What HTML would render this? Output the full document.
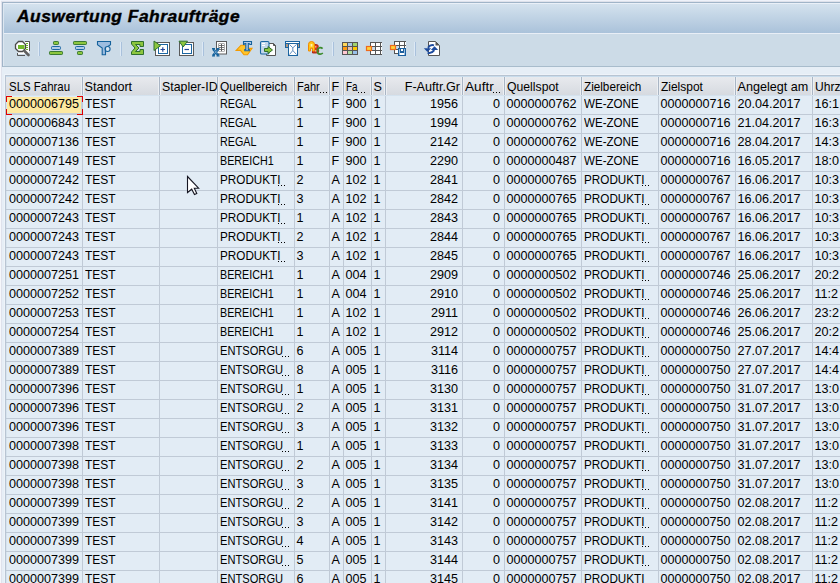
<!DOCTYPE html>
<html><head><meta charset="utf-8">
<style>
*{margin:0;padding:0;box-sizing:border-box}
html,body{width:840px;height:583px;overflow:hidden;background:#f6f7fb;font-family:"Liberation Sans",sans-serif;color:#000}
b,i{display:block;position:absolute}
#lcol{position:absolute;left:1px;top:1px;width:1px;height:582px;background:#dfe2ec}
#tcol{position:absolute;left:1px;top:1px;width:839px;height:1px;background:#dfe2eb}
#trow{position:absolute;left:1px;top:0;width:839px;height:1px;background:#eef2fa}
#frame{position:absolute;left:2px;top:2px;width:838px;height:65px;background:#a0b4c8}
#title{position:absolute;left:3px;top:3px;width:837px;height:30px;background:linear-gradient(#eaf0f8 0,#eaf0f8 1px,#d4e2ee 1px,#aac2da 100%)}
#title span{position:absolute;left:14px;top:3px;font-size:17.4px;font-weight:bold;font-style:italic;line-height:20px;white-space:nowrap;letter-spacing:0.5px;-webkit-text-stroke:0.4px #000}
#tsep{position:absolute;left:3px;top:33px;width:837px;height:1px;background:#e8eef6}
#tool{position:absolute;left:3px;top:34px;width:837px;height:32px;background:#ccdbe7}
#tbot{position:absolute;left:3px;top:66px;width:837px;height:1px;background:#a8bccc}
#work{position:absolute;left:2px;top:67px;width:838px;height:516px;background:#e6eef6}
#thl{position:absolute;left:4px;top:74px;width:836px;height:509px;background:#eef3f9}
#lhl{position:absolute;left:3px;top:3px;width:1px;height:63px;background:#dde7f1}
#grid{position:absolute;left:5px;top:75px;width:835px;height:508px;background:#b8c4d2}
#cells{position:absolute;left:6px;top:76px;width:834px;height:507px;background:#e2ecf5;border-left:1px solid #d6e3ee}
#hdr{position:absolute;left:6px;top:76px;width:834px;height:19px;background:linear-gradient(#c8dcec 0,#c8dcec 1px,#e8eaee 1px,#d6dae0 100%)}
.hs{top:77px;width:1px;height:18px;background:#a9b5c4;box-shadow:-1px 0 0 #eceff3,1px 0 0 #eceff3}
.vl{top:95px;width:1px;height:488px;background:#c0cad6}
.hl{left:6px;width:834px;height:1px;background:#c0cad6}
#hbot{position:absolute;left:6px;top:95px;width:834px;height:1px;background:#d4e2ee}
.t{position:absolute;line-height:20px;font-size:12.6px;white-space:nowrap;transform-origin:0 0}
.dt{width:1px;height:1px;background:#000}
#sel{position:absolute;left:6px;top:96px;width:77px;height:19px}
#sel .g{left:1px;top:1px;width:75px;height:17px;background:#c6cfdb}
#sel .y{left:1px;top:1px;width:74px;height:16px;background:#fde9a0}
#sel .k{background:#e00000}
#cur{position:absolute;left:186px;top:175px}
</style></head><body>
<div id="trow"></div><div id="tcol"></div><div id="lcol"></div>
<div id="frame"></div>
<div id="title"><span>Auswertung Fahraufträge</span></div>
<div id="tsep"></div>
<div id="tool"></div>
<div id="tbot"></div>
<div id="work"></div>
<div id="lhl"></div><div id="thl"></div>
<div id="grid"></div>
<div id="cells"></div>
<b class="hl" style="top:114px"></b><b class="hl" style="top:133px"></b><b class="hl" style="top:152px"></b><b class="hl" style="top:171px"></b><b class="hl" style="top:190px"></b><b class="hl" style="top:209px"></b><b class="hl" style="top:228px"></b><b class="hl" style="top:247px"></b><b class="hl" style="top:266px"></b><b class="hl" style="top:285px"></b><b class="hl" style="top:304px"></b><b class="hl" style="top:323px"></b><b class="hl" style="top:342px"></b><b class="hl" style="top:361px"></b><b class="hl" style="top:380px"></b><b class="hl" style="top:399px"></b><b class="hl" style="top:418px"></b><b class="hl" style="top:437px"></b><b class="hl" style="top:456px"></b><b class="hl" style="top:475px"></b><b class="hl" style="top:494px"></b><b class="hl" style="top:513px"></b><b class="hl" style="top:532px"></b><b class="hl" style="top:551px"></b><b class="hl" style="top:570px"></b><b class="hl" style="top:589px"></b>
<b class="vl" style="left:82px"></b><b class="vl" style="left:159px"></b><b class="vl" style="left:217px"></b><b class="vl" style="left:294px"></b><b class="vl" style="left:329px"></b><b class="vl" style="left:343px"></b><b class="vl" style="left:371px"></b><b class="vl" style="left:385px"></b><b class="vl" style="left:462px"></b><b class="vl" style="left:504px"></b><b class="vl" style="left:581px"></b><b class="vl" style="left:658px"></b><b class="vl" style="left:735px"></b><b class="vl" style="left:812px"></b>
<div id="hdr"></div>
<div id="hbot"></div>
<b class="hs" style="left:82px"></b><b class="hs" style="left:159px"></b><b class="hs" style="left:217px"></b><b class="hs" style="left:294px"></b><b class="hs" style="left:329px"></b><b class="hs" style="left:343px"></b><b class="hs" style="left:371px"></b><b class="hs" style="left:385px"></b><b class="hs" style="left:462px"></b><b class="hs" style="left:504px"></b><b class="hs" style="left:581px"></b><b class="hs" style="left:658px"></b><b class="hs" style="left:735px"></b><b class="hs" style="left:812px"></b>
<div id="sel"><b class="g"></b><b class="y"></b>
<b class="k" style="left:0;top:0;width:6px;height:1px"></b><b class="k" style="left:0;top:0;width:1px;height:6px"></b>
<b class="k" style="left:71px;top:0;width:6px;height:1px"></b><b class="k" style="left:76px;top:0;width:1px;height:6px"></b>
<b class="k" style="left:0;top:18px;width:6px;height:1px"></b><b class="k" style="left:0;top:13px;width:1px;height:6px"></b>
<b class="k" style="left:71px;top:18px;width:6px;height:1px"></b><b class="k" style="left:76px;top:13px;width:1px;height:6px"></b>
</div>
<div id="head"><span class="t" style="top:77px;left:9.0px;transform:scaleX(0.908)">SLS Fahrau</span><span class="t" style="top:77px;left:84.5px">Standort</span><span class="t" style="top:77px;left:161.5px;transform:scaleX(0.98)">Stapler-ID</span><span class="t" style="top:77px;left:219.5px;transform:scaleX(0.948)">Quellbereich</span><span class="t" style="top:77px;left:296.5px;transform:scaleX(0.88)">Fahr</span><b class="dt" style="left:320px;top:92px"></b><b class="dt" style="left:323px;top:92px"></b><b class="dt" style="left:326px;top:92px"></b><span class="t" style="top:77px;left:331.5px">F</span><span class="t" style="top:77px;left:345.5px;transform:scaleX(0.79)">Fa</span><b class="dt" style="left:358px;top:92px"></b><b class="dt" style="left:361px;top:92px"></b><b class="dt" style="left:364px;top:92px"></b><span class="t" style="top:77px;left:373.5px">S</span><span class="t" style="top:77px;left:386px;width:74px;text-align:right">F-Auftr.Gr</span><span class="t" style="top:77px;left:464.5px;transform:scaleX(1.08)">Auftr</span><b class="dt" style="left:493px;top:92px"></b><b class="dt" style="left:496px;top:92px"></b><b class="dt" style="left:499px;top:92px"></b><span class="t" style="top:77px;left:506.5px;transform:scaleX(0.97)">Quellspot</span><span class="t" style="top:77px;left:583.5px;transform:scaleX(0.93)">Zielbereich</span><span class="t" style="top:77px;left:660.5px;transform:scaleX(0.95)">Zielspot</span><span class="t" style="top:77px;left:737.5px">Angelegt am</span><span class="t" style="top:77px;left:814.5px;transform:scaleX(0.96)">Uhrz</span></div>
<svg id="icons" width="460" height="66" viewBox="0 0 460 66" style="position:absolute;left:0;top:0">
<g stroke-linejoin="miter">
<!-- separators -->
<g fill="#a9c1dc"><rect x="39" y="42" width="1" height="14"/><rect x="121" y="42" width="1" height="14"/><rect x="203" y="42" width="1" height="14"/><rect x="333" y="42" width="1" height="14"/><rect x="415" y="42" width="1" height="14"/></g>
<g fill="#dde9f5"><rect x="38" y="42" width="1" height="14"/><rect x="120" y="42" width="1" height="14"/><rect x="202" y="42" width="1" height="14"/><rect x="332" y="42" width="1" height="14"/><rect x="414" y="42" width="1" height="14"/></g>

<!-- 1 details -->
<path d="M25 41.5H29.5V51" fill="none" stroke="#555" stroke-width="1"/>
<rect x="18" y="42" width="11" height="12" fill="#fff"/>
<path d="M17.5 53V55.5H25" fill="none" stroke="#555" stroke-width="1"/>
<polygon points="18.5,41.5 22.5,41.5 25.5,44.5 25.5,48.5 22.5,51.5 18.5,51.5 15.5,48.5 15.5,44.5" fill="#fff" stroke="#4a4a4a" stroke-width="1.3"/>
<rect x="18" y="45" width="6.5" height="4" fill="#72b82a"/>
<g fill="#6db320"><rect x="26" y="43" width="2" height="1"/><rect x="26" y="45" width="2" height="1"/><rect x="26" y="47" width="2" height="1"/><rect x="26" y="49" width="2" height="1"/></g>
<path d="M24.5 51L28.5 55" stroke="#606060" stroke-width="2.6" stroke-linecap="round"/>

<!-- 2 sort asc -->
<rect x="53.5" y="41.5" width="5" height="3" rx="0.7" fill="#8dc63f" stroke="#3b7a33"/>
<rect x="51.5" y="46.5" width="9" height="3" rx="0.9" fill="#b2cbe6" stroke="#1b67a3"/>
<rect x="49.5" y="51.5" width="13" height="3" rx="0.7" fill="#8dc63f" stroke="#3b7a33"/>
<!-- 3 sort desc -->
<rect x="73.5" y="41.5" width="13" height="3" rx="0.7" fill="#8dc63f" stroke="#3b7a33"/>
<rect x="75.5" y="46.5" width="9" height="3" rx="0.9" fill="#b2cbe6" stroke="#1b67a3"/>
<rect x="77.5" y="51.5" width="5" height="3" rx="0.7" fill="#8dc63f" stroke="#3b7a33"/>
<!-- 4 filter -->
<path d="M97.5 41.5H110.5V44.8L105.5 48V54.8H102.2V48L97.5 44.8Z" fill="#9dbde0" stroke="#15629c" stroke-width="1.1"/>
<circle cx="107.6" cy="49" r="2.5" fill="#d8e5f2" stroke="#15629c" stroke-width="1.1"/>
<path d="M105.5 47V52" stroke="#15629c" stroke-width="1.1"/>

<!-- 5 sigma -->
<path d="M131.5 41.5H143.5V46.5H140V44.5H135.5L139 48L135.5 51.5H140V49.5H143.5V54.5H131.5V52L135 48L131.5 44Z" fill="#8cc63f" stroke="#2f6f2f" stroke-width="1"/>
<!-- 6 expand -->
<rect x="155.5" y="42.5" width="14" height="13" fill="#fff" stroke="#5a5a5a"/>
<rect x="158.5" y="44.5" width="9" height="9" fill="#fff" stroke="#1b67a3"/>
<path d="M160.5 49.5H165M162.8 47.3V51.8" stroke="#23479a" stroke-width="1.2"/>
<path d="M154 41V50.5L160.5 45.7Z" fill="#8cc63f" stroke="#2f6f2f" stroke-width="1"/>
<!-- 7 collapse -->
<rect x="179.5" y="42.5" width="14" height="13" fill="#fff" stroke="#5a5a5a"/>
<rect x="182.5" y="44.5" width="9" height="9" fill="#fff" stroke="#1b67a3"/>
<path d="M184.5 49.5H189" stroke="#23479a" stroke-width="1.2"/>
<path d="M179 41.2H187.5L183.2 47Z" fill="#8cc63f" stroke="#2f6f2f" stroke-width="1"/>

<!-- 8 excel -->
<rect x="216.5" y="41.5" width="10" height="12.5" fill="#fff" stroke="#5a5a5a"/>
<rect x="218.5" y="43.5" width="6" height="8" fill="#5a5a5a"/>
<g fill="#fff"><rect x="219" y="44" width="2" height="1.2"/><rect x="222" y="44" width="2" height="1.2"/><rect x="219" y="46" width="2" height="1.2"/><rect x="222" y="46" width="2" height="1.2"/><rect x="219" y="48" width="2" height="1.2"/><rect x="222" y="48" width="2" height="1.2"/><rect x="219" y="50" width="2" height="1.2"/><rect x="222" y="50" width="2" height="1.2"/></g>
<rect x="211" y="47" width="9" height="10" fill="#cfe0f0" opacity="0"/>
<path d="M213 49L218.5 55.5M218.5 49L213 55.5" stroke="#15629c" stroke-width="2.2"/>
<path d="M212 48.6H215M216.5 48.6H219.5M212 55.8H215M216.5 55.8H219.5" stroke="#15629c" stroke-width="1.3"/>
<path d="M214.3 50.3L217.2 53.8M217.2 50.3L214.3 53.8" stroke="#9cc0e0" stroke-width="0.6"/>
<!-- 9 word T -->
<path d="M236.2 50.4L241 45.2H245.5L249 48.4H252L247.5 54.8H244L240.5 50.4Z" fill="#ffc52a" stroke="#f39a00" stroke-width="1.1"/>
<path d="M243.5 41.5H251.5V44.5H250L249 43.5H248.3V49.5H249.3V50.8H244.8V49.5H245.8V43.5H245L244 44.5H243.5Z" fill="#b5cde6" stroke="#15629c" stroke-width="1.1"/>
<!-- 10 local file -->
<path d="M266.5 43.5H273.5L275.5 45.5V55.5H266.5Z" fill="#fff" stroke="#555"/>
<path d="M273.5 43.5V45.5H275.5" fill="#555" stroke="#555"/>
<rect x="260.5" y="41.5" width="8.5" height="12.5" rx="1.3" fill="#c2d6eb" stroke="#1b67a3" stroke-width="1.1"/>
<g fill="#fff"><rect x="262" y="43" width="3" height="1"/><rect x="262" y="45" width="3" height="1"/></g>
<path d="M264.5 48.5H268V46.5L272.5 50L268 53.5V51.5H264.5Z" fill="#8cc63f" stroke="#2f6f2f" stroke-width="1"/>
<!-- 11 mail -->
<rect x="285" y="41" width="15" height="7" fill="#1b64a0"/>
<rect x="286" y="42" width="13" height="1" fill="#fff"/>
<rect x="286" y="44" width="2" height="3" fill="#b09882"/>
<rect x="297" y="44" width="2" height="3" fill="#b09882"/>
<rect x="288" y="43" width="10" height="13" fill="#1b64a0"/>
<rect x="289" y="44" width="8" height="11" fill="#fff"/>
<path d="M289.5 44.5L292.8 47.8V50.5L289.5 54.5M296.5 44.5L292.8 47.8M292.8 50.5L296.5 54.5" fill="none" stroke="#3a72b0" stroke-width="0.8"/>
<!-- 12 ABC -->
<path d="M312.5 44.5H316.3Q318.3 44.5 318.3 46.6Q318.3 48 317.2 48.6Q318.8 49.2 318.8 51Q318.8 53 316.3 53H312.5Z" fill="#d23a1c" stroke="#a8200e" stroke-width="0.9"/>
<rect x="315" y="46" width="1.4" height="1.6" fill="#f0a080"/><rect x="315" y="50" width="1.6" height="1.6" fill="#f0a080"/>
<path d="M308.5 51V44.3Q308.5 41.5 311.5 41.5Q314.5 41.5 314.5 44.3V51H312.5V48.3H310.5V51Z" fill="#ffc619" stroke="#f28a00" stroke-width="1"/>
<rect x="310.6" y="44" width="1.8" height="2.6" fill="#fff3b0"/>
<path d="M322.6 48.6Q321.3 47.3 319.6 47.7Q317.4 48.3 317.4 50.9Q317.4 54 319.9 54.1Q321.6 54.2 322.8 53" fill="none" stroke="#3a8a2a" stroke-width="1.7"/>
<!-- 13 layout grid -->
<rect x="342" y="42" width="16" height="13" fill="#555"/>
<rect x="343" y="43" width="4" height="3" fill="#ffd85a"/><rect x="348" y="43" width="4" height="3" fill="#a6c8ea"/><rect x="353" y="43" width="4" height="3" fill="#a2d26c"/>
<rect x="343" y="47" width="4" height="3" fill="#ff9a12"/><rect x="348" y="47" width="4" height="3" fill="#e6bfae"/><rect x="353" y="47" width="4" height="3" fill="#ffc800"/>
<rect x="343" y="51" width="4" height="3" fill="#ffc8d2"/><rect x="348" y="51" width="4" height="3" fill="#b0dea0"/><rect x="353" y="51" width="4" height="3" fill="#98c0e8"/>
<!-- 14 choose layout -->
<rect x="370" y="42" width="12" height="13" fill="#555"/>
<g fill="#fff"><rect x="371" y="43" width="4" height="3"/><rect x="376" y="43" width="4" height="3"/><rect x="381" y="43" width="1" height="3"/>
<rect x="371" y="47" width="4" height="3" style="fill:#c8dcec"/><rect x="376" y="47" width="4" height="3"/><rect x="381" y="47" width="1" height="3"/>
<rect x="371" y="51" width="4" height="3"/><rect x="376" y="51" width="4" height="3"/><rect x="381" y="51" width="1" height="3"/></g>
<rect x="366.5" y="46.5" width="5" height="4" fill="#ffd33a" stroke="#ee6a1c" stroke-width="1.2"/>
<!-- 15 save layout -->
<rect x="394" y="41" width="12" height="13" fill="#555"/>
<g fill="#fff"><rect x="395" y="42" width="4" height="3"/><rect x="400" y="42" width="4" height="3"/><rect x="405" y="42" width="1" height="3"/>
<rect x="395" y="46" width="4" height="3" style="fill:#c8dcec"/><rect x="400" y="46" width="4" height="3"/><rect x="405" y="46" width="1" height="3"/>
<rect x="395" y="50" width="4" height="3"/><rect x="400" y="50" width="4" height="3"/><rect x="405" y="50" width="1" height="3"/></g>
<rect x="390.5" y="45.5" width="5" height="4" fill="#ffd33a" stroke="#ee6a1c" stroke-width="1.2"/>
<rect x="398" y="48" width="8" height="8" fill="#1b5f9e"/>
<rect x="399" y="49" width="1" height="6" fill="#9fbfe0"/><rect x="404" y="49" width="1" height="6" fill="#9fbfe0"/>
<rect x="401" y="49" width="2" height="2" fill="#fff"/>
<rect x="400" y="53" width="4" height="2" fill="#fff"/>
<!-- 16 refresh -->
<path d="M428.5 41.5H435.5L439.5 45.5V55.5H428.5Z" fill="#fff" stroke="#555"/>
<path d="M435.5 41.5V45.5H439.5Z" fill="#555"/>
<path d="M434 45.4Q430.5 44.2 428 47.8" fill="none" stroke="#1d4b9e" stroke-width="2"/>
<path d="M423.8 48.2H431.2L427.5 52Z" fill="#1d4b9e"/>
<path d="M427.6 52.8Q431.5 54 434.3 50.2" fill="none" stroke="#1d4b9e" stroke-width="2"/>
<path d="M430.8 50H438.2L434.5 46.2Z" fill="#1d4b9e"/>
</g>
</svg>

<div id="body">
<span class="t" style="top:94px;left:9.0px">0000006795</span><span class="t" style="top:94px;left:84.5px;transform:scaleX(0.95)">TEST</span><span class="t" style="top:94px;left:219.5px;transform:scaleX(0.854)">REGAL</span><span class="t" style="top:94px;left:296.5px">1</span><span class="t" style="top:94px;left:331.5px">F</span><span class="t" style="top:94px;left:345.5px">900</span><span class="t" style="top:94px;left:373.5px">1</span><span class="t" style="top:94px;left:386px;width:72px;text-align:right">1956</span><span class="t" style="top:94px;left:463px;width:37px;text-align:right">0</span><span class="t" style="top:94px;left:506.5px">0000000762</span><span class="t" style="top:94px;left:583.5px;transform:scaleX(0.92)">WE-ZONE</span><span class="t" style="top:94px;left:660.5px">0000000716</span><span class="t" style="top:94px;left:737.5px">20.04.2017</span><span class="t" style="top:94px;left:814.5px">16:1</span>
<span class="t" style="top:113px;left:9.0px">0000006843</span><span class="t" style="top:113px;left:84.5px;transform:scaleX(0.95)">TEST</span><span class="t" style="top:113px;left:219.5px;transform:scaleX(0.854)">REGAL</span><span class="t" style="top:113px;left:296.5px">1</span><span class="t" style="top:113px;left:331.5px">F</span><span class="t" style="top:113px;left:345.5px">900</span><span class="t" style="top:113px;left:373.5px">1</span><span class="t" style="top:113px;left:386px;width:72px;text-align:right">1994</span><span class="t" style="top:113px;left:463px;width:37px;text-align:right">0</span><span class="t" style="top:113px;left:506.5px">0000000762</span><span class="t" style="top:113px;left:583.5px;transform:scaleX(0.92)">WE-ZONE</span><span class="t" style="top:113px;left:660.5px">0000000716</span><span class="t" style="top:113px;left:737.5px">21.04.2017</span><span class="t" style="top:113px;left:814.5px">16:3</span>
<span class="t" style="top:132px;left:9.0px">0000007136</span><span class="t" style="top:132px;left:84.5px;transform:scaleX(0.95)">TEST</span><span class="t" style="top:132px;left:219.5px;transform:scaleX(0.854)">REGAL</span><span class="t" style="top:132px;left:296.5px">1</span><span class="t" style="top:132px;left:331.5px">F</span><span class="t" style="top:132px;left:345.5px">900</span><span class="t" style="top:132px;left:373.5px">1</span><span class="t" style="top:132px;left:386px;width:72px;text-align:right">2142</span><span class="t" style="top:132px;left:463px;width:37px;text-align:right">0</span><span class="t" style="top:132px;left:506.5px">0000000762</span><span class="t" style="top:132px;left:583.5px;transform:scaleX(0.92)">WE-ZONE</span><span class="t" style="top:132px;left:660.5px">0000000716</span><span class="t" style="top:132px;left:737.5px">28.04.2017</span><span class="t" style="top:132px;left:814.5px">14:3</span>
<span class="t" style="top:151px;left:9.0px">0000007149</span><span class="t" style="top:151px;left:84.5px;transform:scaleX(0.95)">TEST</span><span class="t" style="top:151px;left:219.5px;transform:scaleX(0.852)">BEREICH1</span><span class="t" style="top:151px;left:296.5px">1</span><span class="t" style="top:151px;left:331.5px">F</span><span class="t" style="top:151px;left:345.5px">900</span><span class="t" style="top:151px;left:373.5px">1</span><span class="t" style="top:151px;left:386px;width:72px;text-align:right">2290</span><span class="t" style="top:151px;left:463px;width:37px;text-align:right">0</span><span class="t" style="top:151px;left:506.5px">0000000487</span><span class="t" style="top:151px;left:583.5px;transform:scaleX(0.92)">WE-ZONE</span><span class="t" style="top:151px;left:660.5px">0000000716</span><span class="t" style="top:151px;left:737.5px">16.05.2017</span><span class="t" style="top:151px;left:814.5px">18:0</span>
<span class="t" style="top:170px;left:9.0px">0000007242</span><span class="t" style="top:170px;left:84.5px;transform:scaleX(0.95)">TEST</span><span class="t" style="top:170px;left:219.5px;transform:scaleX(0.93)">PRODUKTI</span><b class="dt" style="left:278px;top:185px"></b><b class="dt" style="left:281px;top:185px"></b><b class="dt" style="left:284px;top:185px"></b><span class="t" style="top:170px;left:296.5px">2</span><span class="t" style="top:170px;left:331.5px">A</span><span class="t" style="top:170px;left:345.5px">102</span><span class="t" style="top:170px;left:373.5px">1</span><span class="t" style="top:170px;left:386px;width:72px;text-align:right">2841</span><span class="t" style="top:170px;left:463px;width:37px;text-align:right">0</span><span class="t" style="top:170px;left:506.5px">0000000765</span><span class="t" style="top:170px;left:583.5px;transform:scaleX(0.93)">PRODUKTI</span><b class="dt" style="left:642px;top:185px"></b><b class="dt" style="left:645px;top:185px"></b><b class="dt" style="left:648px;top:185px"></b><span class="t" style="top:170px;left:660.5px">0000000767</span><span class="t" style="top:170px;left:737.5px">16.06.2017</span><span class="t" style="top:170px;left:814.5px">10:3</span>
<span class="t" style="top:189px;left:9.0px">0000007242</span><span class="t" style="top:189px;left:84.5px;transform:scaleX(0.95)">TEST</span><span class="t" style="top:189px;left:219.5px;transform:scaleX(0.93)">PRODUKTI</span><b class="dt" style="left:278px;top:204px"></b><b class="dt" style="left:281px;top:204px"></b><b class="dt" style="left:284px;top:204px"></b><span class="t" style="top:189px;left:296.5px">3</span><span class="t" style="top:189px;left:331.5px">A</span><span class="t" style="top:189px;left:345.5px">102</span><span class="t" style="top:189px;left:373.5px">1</span><span class="t" style="top:189px;left:386px;width:72px;text-align:right">2842</span><span class="t" style="top:189px;left:463px;width:37px;text-align:right">0</span><span class="t" style="top:189px;left:506.5px">0000000765</span><span class="t" style="top:189px;left:583.5px;transform:scaleX(0.93)">PRODUKTI</span><b class="dt" style="left:642px;top:204px"></b><b class="dt" style="left:645px;top:204px"></b><b class="dt" style="left:648px;top:204px"></b><span class="t" style="top:189px;left:660.5px">0000000767</span><span class="t" style="top:189px;left:737.5px">16.06.2017</span><span class="t" style="top:189px;left:814.5px">10:3</span>
<span class="t" style="top:208px;left:9.0px">0000007243</span><span class="t" style="top:208px;left:84.5px;transform:scaleX(0.95)">TEST</span><span class="t" style="top:208px;left:219.5px;transform:scaleX(0.93)">PRODUKTI</span><b class="dt" style="left:278px;top:223px"></b><b class="dt" style="left:281px;top:223px"></b><b class="dt" style="left:284px;top:223px"></b><span class="t" style="top:208px;left:296.5px">1</span><span class="t" style="top:208px;left:331.5px">A</span><span class="t" style="top:208px;left:345.5px">102</span><span class="t" style="top:208px;left:373.5px">1</span><span class="t" style="top:208px;left:386px;width:72px;text-align:right">2843</span><span class="t" style="top:208px;left:463px;width:37px;text-align:right">0</span><span class="t" style="top:208px;left:506.5px">0000000765</span><span class="t" style="top:208px;left:583.5px;transform:scaleX(0.93)">PRODUKTI</span><b class="dt" style="left:642px;top:223px"></b><b class="dt" style="left:645px;top:223px"></b><b class="dt" style="left:648px;top:223px"></b><span class="t" style="top:208px;left:660.5px">0000000767</span><span class="t" style="top:208px;left:737.5px">16.06.2017</span><span class="t" style="top:208px;left:814.5px">10:3</span>
<span class="t" style="top:227px;left:9.0px">0000007243</span><span class="t" style="top:227px;left:84.5px;transform:scaleX(0.95)">TEST</span><span class="t" style="top:227px;left:219.5px;transform:scaleX(0.93)">PRODUKTI</span><b class="dt" style="left:278px;top:242px"></b><b class="dt" style="left:281px;top:242px"></b><b class="dt" style="left:284px;top:242px"></b><span class="t" style="top:227px;left:296.5px">2</span><span class="t" style="top:227px;left:331.5px">A</span><span class="t" style="top:227px;left:345.5px">102</span><span class="t" style="top:227px;left:373.5px">1</span><span class="t" style="top:227px;left:386px;width:72px;text-align:right">2844</span><span class="t" style="top:227px;left:463px;width:37px;text-align:right">0</span><span class="t" style="top:227px;left:506.5px">0000000765</span><span class="t" style="top:227px;left:583.5px;transform:scaleX(0.93)">PRODUKTI</span><b class="dt" style="left:642px;top:242px"></b><b class="dt" style="left:645px;top:242px"></b><b class="dt" style="left:648px;top:242px"></b><span class="t" style="top:227px;left:660.5px">0000000767</span><span class="t" style="top:227px;left:737.5px">16.06.2017</span><span class="t" style="top:227px;left:814.5px">10:3</span>
<span class="t" style="top:246px;left:9.0px">0000007243</span><span class="t" style="top:246px;left:84.5px;transform:scaleX(0.95)">TEST</span><span class="t" style="top:246px;left:219.5px;transform:scaleX(0.93)">PRODUKTI</span><b class="dt" style="left:278px;top:261px"></b><b class="dt" style="left:281px;top:261px"></b><b class="dt" style="left:284px;top:261px"></b><span class="t" style="top:246px;left:296.5px">3</span><span class="t" style="top:246px;left:331.5px">A</span><span class="t" style="top:246px;left:345.5px">102</span><span class="t" style="top:246px;left:373.5px">1</span><span class="t" style="top:246px;left:386px;width:72px;text-align:right">2845</span><span class="t" style="top:246px;left:463px;width:37px;text-align:right">0</span><span class="t" style="top:246px;left:506.5px">0000000765</span><span class="t" style="top:246px;left:583.5px;transform:scaleX(0.93)">PRODUKTI</span><b class="dt" style="left:642px;top:261px"></b><b class="dt" style="left:645px;top:261px"></b><b class="dt" style="left:648px;top:261px"></b><span class="t" style="top:246px;left:660.5px">0000000767</span><span class="t" style="top:246px;left:737.5px">16.06.2017</span><span class="t" style="top:246px;left:814.5px">10:3</span>
<span class="t" style="top:265px;left:9.0px">0000007251</span><span class="t" style="top:265px;left:84.5px;transform:scaleX(0.95)">TEST</span><span class="t" style="top:265px;left:219.5px;transform:scaleX(0.852)">BEREICH1</span><span class="t" style="top:265px;left:296.5px">1</span><span class="t" style="top:265px;left:331.5px">A</span><span class="t" style="top:265px;left:345.5px">004</span><span class="t" style="top:265px;left:373.5px">1</span><span class="t" style="top:265px;left:386px;width:72px;text-align:right">2909</span><span class="t" style="top:265px;left:463px;width:37px;text-align:right">0</span><span class="t" style="top:265px;left:506.5px">0000000502</span><span class="t" style="top:265px;left:583.5px;transform:scaleX(0.93)">PRODUKTI</span><b class="dt" style="left:642px;top:280px"></b><b class="dt" style="left:645px;top:280px"></b><b class="dt" style="left:648px;top:280px"></b><span class="t" style="top:265px;left:660.5px">0000000746</span><span class="t" style="top:265px;left:737.5px">25.06.2017</span><span class="t" style="top:265px;left:814.5px">20:2</span>
<span class="t" style="top:284px;left:9.0px">0000007252</span><span class="t" style="top:284px;left:84.5px;transform:scaleX(0.95)">TEST</span><span class="t" style="top:284px;left:219.5px;transform:scaleX(0.852)">BEREICH1</span><span class="t" style="top:284px;left:296.5px">1</span><span class="t" style="top:284px;left:331.5px">A</span><span class="t" style="top:284px;left:345.5px">004</span><span class="t" style="top:284px;left:373.5px">1</span><span class="t" style="top:284px;left:386px;width:72px;text-align:right">2910</span><span class="t" style="top:284px;left:463px;width:37px;text-align:right">0</span><span class="t" style="top:284px;left:506.5px">0000000502</span><span class="t" style="top:284px;left:583.5px;transform:scaleX(0.93)">PRODUKTI</span><b class="dt" style="left:642px;top:299px"></b><b class="dt" style="left:645px;top:299px"></b><b class="dt" style="left:648px;top:299px"></b><span class="t" style="top:284px;left:660.5px">0000000746</span><span class="t" style="top:284px;left:737.5px">25.06.2017</span><span class="t" style="top:284px;left:814.5px">11:2</span>
<span class="t" style="top:303px;left:9.0px">0000007253</span><span class="t" style="top:303px;left:84.5px;transform:scaleX(0.95)">TEST</span><span class="t" style="top:303px;left:219.5px;transform:scaleX(0.852)">BEREICH1</span><span class="t" style="top:303px;left:296.5px">1</span><span class="t" style="top:303px;left:331.5px">A</span><span class="t" style="top:303px;left:345.5px">102</span><span class="t" style="top:303px;left:373.5px">1</span><span class="t" style="top:303px;left:386px;width:72px;text-align:right">2911</span><span class="t" style="top:303px;left:463px;width:37px;text-align:right">0</span><span class="t" style="top:303px;left:506.5px">0000000502</span><span class="t" style="top:303px;left:583.5px;transform:scaleX(0.93)">PRODUKTI</span><b class="dt" style="left:642px;top:318px"></b><b class="dt" style="left:645px;top:318px"></b><b class="dt" style="left:648px;top:318px"></b><span class="t" style="top:303px;left:660.5px">0000000746</span><span class="t" style="top:303px;left:737.5px">26.06.2017</span><span class="t" style="top:303px;left:814.5px">23:2</span>
<span class="t" style="top:322px;left:9.0px">0000007254</span><span class="t" style="top:322px;left:84.5px;transform:scaleX(0.95)">TEST</span><span class="t" style="top:322px;left:219.5px;transform:scaleX(0.852)">BEREICH1</span><span class="t" style="top:322px;left:296.5px">1</span><span class="t" style="top:322px;left:331.5px">A</span><span class="t" style="top:322px;left:345.5px">102</span><span class="t" style="top:322px;left:373.5px">1</span><span class="t" style="top:322px;left:386px;width:72px;text-align:right">2912</span><span class="t" style="top:322px;left:463px;width:37px;text-align:right">0</span><span class="t" style="top:322px;left:506.5px">0000000502</span><span class="t" style="top:322px;left:583.5px;transform:scaleX(0.93)">PRODUKTI</span><b class="dt" style="left:642px;top:337px"></b><b class="dt" style="left:645px;top:337px"></b><b class="dt" style="left:648px;top:337px"></b><span class="t" style="top:322px;left:660.5px">0000000746</span><span class="t" style="top:322px;left:737.5px">25.06.2017</span><span class="t" style="top:322px;left:814.5px">20:2</span>
<span class="t" style="top:341px;left:9.0px">0000007389</span><span class="t" style="top:341px;left:84.5px;transform:scaleX(0.95)">TEST</span><span class="t" style="top:341px;left:219.5px;transform:scaleX(0.884)">ENTSORGU</span><b class="dt" style="left:282px;top:356px"></b><b class="dt" style="left:285px;top:356px"></b><b class="dt" style="left:288px;top:356px"></b><span class="t" style="top:341px;left:296.5px">6</span><span class="t" style="top:341px;left:331.5px">A</span><span class="t" style="top:341px;left:345.5px">005</span><span class="t" style="top:341px;left:373.5px">1</span><span class="t" style="top:341px;left:386px;width:72px;text-align:right">3114</span><span class="t" style="top:341px;left:463px;width:37px;text-align:right">0</span><span class="t" style="top:341px;left:506.5px">0000000757</span><span class="t" style="top:341px;left:583.5px;transform:scaleX(0.93)">PRODUKTI</span><b class="dt" style="left:642px;top:356px"></b><b class="dt" style="left:645px;top:356px"></b><b class="dt" style="left:648px;top:356px"></b><span class="t" style="top:341px;left:660.5px">0000000750</span><span class="t" style="top:341px;left:737.5px">27.07.2017</span><span class="t" style="top:341px;left:814.5px">14:4</span>
<span class="t" style="top:360px;left:9.0px">0000007389</span><span class="t" style="top:360px;left:84.5px;transform:scaleX(0.95)">TEST</span><span class="t" style="top:360px;left:219.5px;transform:scaleX(0.884)">ENTSORGU</span><b class="dt" style="left:282px;top:375px"></b><b class="dt" style="left:285px;top:375px"></b><b class="dt" style="left:288px;top:375px"></b><span class="t" style="top:360px;left:296.5px">8</span><span class="t" style="top:360px;left:331.5px">A</span><span class="t" style="top:360px;left:345.5px">005</span><span class="t" style="top:360px;left:373.5px">1</span><span class="t" style="top:360px;left:386px;width:72px;text-align:right">3116</span><span class="t" style="top:360px;left:463px;width:37px;text-align:right">0</span><span class="t" style="top:360px;left:506.5px">0000000757</span><span class="t" style="top:360px;left:583.5px;transform:scaleX(0.93)">PRODUKTI</span><b class="dt" style="left:642px;top:375px"></b><b class="dt" style="left:645px;top:375px"></b><b class="dt" style="left:648px;top:375px"></b><span class="t" style="top:360px;left:660.5px">0000000750</span><span class="t" style="top:360px;left:737.5px">27.07.2017</span><span class="t" style="top:360px;left:814.5px">14:4</span>
<span class="t" style="top:379px;left:9.0px">0000007396</span><span class="t" style="top:379px;left:84.5px;transform:scaleX(0.95)">TEST</span><span class="t" style="top:379px;left:219.5px;transform:scaleX(0.884)">ENTSORGU</span><b class="dt" style="left:282px;top:394px"></b><b class="dt" style="left:285px;top:394px"></b><b class="dt" style="left:288px;top:394px"></b><span class="t" style="top:379px;left:296.5px">1</span><span class="t" style="top:379px;left:331.5px">A</span><span class="t" style="top:379px;left:345.5px">005</span><span class="t" style="top:379px;left:373.5px">1</span><span class="t" style="top:379px;left:386px;width:72px;text-align:right">3130</span><span class="t" style="top:379px;left:463px;width:37px;text-align:right">0</span><span class="t" style="top:379px;left:506.5px">0000000757</span><span class="t" style="top:379px;left:583.5px;transform:scaleX(0.93)">PRODUKTI</span><b class="dt" style="left:642px;top:394px"></b><b class="dt" style="left:645px;top:394px"></b><b class="dt" style="left:648px;top:394px"></b><span class="t" style="top:379px;left:660.5px">0000000750</span><span class="t" style="top:379px;left:737.5px">31.07.2017</span><span class="t" style="top:379px;left:814.5px">13:0</span>
<span class="t" style="top:398px;left:9.0px">0000007396</span><span class="t" style="top:398px;left:84.5px;transform:scaleX(0.95)">TEST</span><span class="t" style="top:398px;left:219.5px;transform:scaleX(0.884)">ENTSORGU</span><b class="dt" style="left:282px;top:413px"></b><b class="dt" style="left:285px;top:413px"></b><b class="dt" style="left:288px;top:413px"></b><span class="t" style="top:398px;left:296.5px">2</span><span class="t" style="top:398px;left:331.5px">A</span><span class="t" style="top:398px;left:345.5px">005</span><span class="t" style="top:398px;left:373.5px">1</span><span class="t" style="top:398px;left:386px;width:72px;text-align:right">3131</span><span class="t" style="top:398px;left:463px;width:37px;text-align:right">0</span><span class="t" style="top:398px;left:506.5px">0000000757</span><span class="t" style="top:398px;left:583.5px;transform:scaleX(0.93)">PRODUKTI</span><b class="dt" style="left:642px;top:413px"></b><b class="dt" style="left:645px;top:413px"></b><b class="dt" style="left:648px;top:413px"></b><span class="t" style="top:398px;left:660.5px">0000000750</span><span class="t" style="top:398px;left:737.5px">31.07.2017</span><span class="t" style="top:398px;left:814.5px">13:0</span>
<span class="t" style="top:417px;left:9.0px">0000007396</span><span class="t" style="top:417px;left:84.5px;transform:scaleX(0.95)">TEST</span><span class="t" style="top:417px;left:219.5px;transform:scaleX(0.884)">ENTSORGU</span><b class="dt" style="left:282px;top:432px"></b><b class="dt" style="left:285px;top:432px"></b><b class="dt" style="left:288px;top:432px"></b><span class="t" style="top:417px;left:296.5px">3</span><span class="t" style="top:417px;left:331.5px">A</span><span class="t" style="top:417px;left:345.5px">005</span><span class="t" style="top:417px;left:373.5px">1</span><span class="t" style="top:417px;left:386px;width:72px;text-align:right">3132</span><span class="t" style="top:417px;left:463px;width:37px;text-align:right">0</span><span class="t" style="top:417px;left:506.5px">0000000757</span><span class="t" style="top:417px;left:583.5px;transform:scaleX(0.93)">PRODUKTI</span><b class="dt" style="left:642px;top:432px"></b><b class="dt" style="left:645px;top:432px"></b><b class="dt" style="left:648px;top:432px"></b><span class="t" style="top:417px;left:660.5px">0000000750</span><span class="t" style="top:417px;left:737.5px">31.07.2017</span><span class="t" style="top:417px;left:814.5px">13:0</span>
<span class="t" style="top:436px;left:9.0px">0000007398</span><span class="t" style="top:436px;left:84.5px;transform:scaleX(0.95)">TEST</span><span class="t" style="top:436px;left:219.5px;transform:scaleX(0.884)">ENTSORGU</span><b class="dt" style="left:282px;top:451px"></b><b class="dt" style="left:285px;top:451px"></b><b class="dt" style="left:288px;top:451px"></b><span class="t" style="top:436px;left:296.5px">1</span><span class="t" style="top:436px;left:331.5px">A</span><span class="t" style="top:436px;left:345.5px">005</span><span class="t" style="top:436px;left:373.5px">1</span><span class="t" style="top:436px;left:386px;width:72px;text-align:right">3133</span><span class="t" style="top:436px;left:463px;width:37px;text-align:right">0</span><span class="t" style="top:436px;left:506.5px">0000000757</span><span class="t" style="top:436px;left:583.5px;transform:scaleX(0.93)">PRODUKTI</span><b class="dt" style="left:642px;top:451px"></b><b class="dt" style="left:645px;top:451px"></b><b class="dt" style="left:648px;top:451px"></b><span class="t" style="top:436px;left:660.5px">0000000750</span><span class="t" style="top:436px;left:737.5px">31.07.2017</span><span class="t" style="top:436px;left:814.5px">13:0</span>
<span class="t" style="top:455px;left:9.0px">0000007398</span><span class="t" style="top:455px;left:84.5px;transform:scaleX(0.95)">TEST</span><span class="t" style="top:455px;left:219.5px;transform:scaleX(0.884)">ENTSORGU</span><b class="dt" style="left:282px;top:470px"></b><b class="dt" style="left:285px;top:470px"></b><b class="dt" style="left:288px;top:470px"></b><span class="t" style="top:455px;left:296.5px">2</span><span class="t" style="top:455px;left:331.5px">A</span><span class="t" style="top:455px;left:345.5px">005</span><span class="t" style="top:455px;left:373.5px">1</span><span class="t" style="top:455px;left:386px;width:72px;text-align:right">3134</span><span class="t" style="top:455px;left:463px;width:37px;text-align:right">0</span><span class="t" style="top:455px;left:506.5px">0000000757</span><span class="t" style="top:455px;left:583.5px;transform:scaleX(0.93)">PRODUKTI</span><b class="dt" style="left:642px;top:470px"></b><b class="dt" style="left:645px;top:470px"></b><b class="dt" style="left:648px;top:470px"></b><span class="t" style="top:455px;left:660.5px">0000000750</span><span class="t" style="top:455px;left:737.5px">31.07.2017</span><span class="t" style="top:455px;left:814.5px">13:0</span>
<span class="t" style="top:474px;left:9.0px">0000007398</span><span class="t" style="top:474px;left:84.5px;transform:scaleX(0.95)">TEST</span><span class="t" style="top:474px;left:219.5px;transform:scaleX(0.884)">ENTSORGU</span><b class="dt" style="left:282px;top:489px"></b><b class="dt" style="left:285px;top:489px"></b><b class="dt" style="left:288px;top:489px"></b><span class="t" style="top:474px;left:296.5px">3</span><span class="t" style="top:474px;left:331.5px">A</span><span class="t" style="top:474px;left:345.5px">005</span><span class="t" style="top:474px;left:373.5px">1</span><span class="t" style="top:474px;left:386px;width:72px;text-align:right">3135</span><span class="t" style="top:474px;left:463px;width:37px;text-align:right">0</span><span class="t" style="top:474px;left:506.5px">0000000757</span><span class="t" style="top:474px;left:583.5px;transform:scaleX(0.93)">PRODUKTI</span><b class="dt" style="left:642px;top:489px"></b><b class="dt" style="left:645px;top:489px"></b><b class="dt" style="left:648px;top:489px"></b><span class="t" style="top:474px;left:660.5px">0000000750</span><span class="t" style="top:474px;left:737.5px">31.07.2017</span><span class="t" style="top:474px;left:814.5px">13:0</span>
<span class="t" style="top:493px;left:9.0px">0000007399</span><span class="t" style="top:493px;left:84.5px;transform:scaleX(0.95)">TEST</span><span class="t" style="top:493px;left:219.5px;transform:scaleX(0.884)">ENTSORGU</span><b class="dt" style="left:282px;top:508px"></b><b class="dt" style="left:285px;top:508px"></b><b class="dt" style="left:288px;top:508px"></b><span class="t" style="top:493px;left:296.5px">2</span><span class="t" style="top:493px;left:331.5px">A</span><span class="t" style="top:493px;left:345.5px">005</span><span class="t" style="top:493px;left:373.5px">1</span><span class="t" style="top:493px;left:386px;width:72px;text-align:right">3141</span><span class="t" style="top:493px;left:463px;width:37px;text-align:right">0</span><span class="t" style="top:493px;left:506.5px">0000000757</span><span class="t" style="top:493px;left:583.5px;transform:scaleX(0.93)">PRODUKTI</span><b class="dt" style="left:642px;top:508px"></b><b class="dt" style="left:645px;top:508px"></b><b class="dt" style="left:648px;top:508px"></b><span class="t" style="top:493px;left:660.5px">0000000750</span><span class="t" style="top:493px;left:737.5px">02.08.2017</span><span class="t" style="top:493px;left:814.5px">11:2</span>
<span class="t" style="top:512px;left:9.0px">0000007399</span><span class="t" style="top:512px;left:84.5px;transform:scaleX(0.95)">TEST</span><span class="t" style="top:512px;left:219.5px;transform:scaleX(0.884)">ENTSORGU</span><b class="dt" style="left:282px;top:527px"></b><b class="dt" style="left:285px;top:527px"></b><b class="dt" style="left:288px;top:527px"></b><span class="t" style="top:512px;left:296.5px">3</span><span class="t" style="top:512px;left:331.5px">A</span><span class="t" style="top:512px;left:345.5px">005</span><span class="t" style="top:512px;left:373.5px">1</span><span class="t" style="top:512px;left:386px;width:72px;text-align:right">3142</span><span class="t" style="top:512px;left:463px;width:37px;text-align:right">0</span><span class="t" style="top:512px;left:506.5px">0000000757</span><span class="t" style="top:512px;left:583.5px;transform:scaleX(0.93)">PRODUKTI</span><b class="dt" style="left:642px;top:527px"></b><b class="dt" style="left:645px;top:527px"></b><b class="dt" style="left:648px;top:527px"></b><span class="t" style="top:512px;left:660.5px">0000000750</span><span class="t" style="top:512px;left:737.5px">02.08.2017</span><span class="t" style="top:512px;left:814.5px">11:2</span>
<span class="t" style="top:531px;left:9.0px">0000007399</span><span class="t" style="top:531px;left:84.5px;transform:scaleX(0.95)">TEST</span><span class="t" style="top:531px;left:219.5px;transform:scaleX(0.884)">ENTSORGU</span><b class="dt" style="left:282px;top:546px"></b><b class="dt" style="left:285px;top:546px"></b><b class="dt" style="left:288px;top:546px"></b><span class="t" style="top:531px;left:296.5px">4</span><span class="t" style="top:531px;left:331.5px">A</span><span class="t" style="top:531px;left:345.5px">005</span><span class="t" style="top:531px;left:373.5px">1</span><span class="t" style="top:531px;left:386px;width:72px;text-align:right">3143</span><span class="t" style="top:531px;left:463px;width:37px;text-align:right">0</span><span class="t" style="top:531px;left:506.5px">0000000757</span><span class="t" style="top:531px;left:583.5px;transform:scaleX(0.93)">PRODUKTI</span><b class="dt" style="left:642px;top:546px"></b><b class="dt" style="left:645px;top:546px"></b><b class="dt" style="left:648px;top:546px"></b><span class="t" style="top:531px;left:660.5px">0000000750</span><span class="t" style="top:531px;left:737.5px">02.08.2017</span><span class="t" style="top:531px;left:814.5px">11:2</span>
<span class="t" style="top:550px;left:9.0px">0000007399</span><span class="t" style="top:550px;left:84.5px;transform:scaleX(0.95)">TEST</span><span class="t" style="top:550px;left:219.5px;transform:scaleX(0.884)">ENTSORGU</span><b class="dt" style="left:282px;top:565px"></b><b class="dt" style="left:285px;top:565px"></b><b class="dt" style="left:288px;top:565px"></b><span class="t" style="top:550px;left:296.5px">5</span><span class="t" style="top:550px;left:331.5px">A</span><span class="t" style="top:550px;left:345.5px">005</span><span class="t" style="top:550px;left:373.5px">1</span><span class="t" style="top:550px;left:386px;width:72px;text-align:right">3144</span><span class="t" style="top:550px;left:463px;width:37px;text-align:right">0</span><span class="t" style="top:550px;left:506.5px">0000000757</span><span class="t" style="top:550px;left:583.5px;transform:scaleX(0.93)">PRODUKTI</span><b class="dt" style="left:642px;top:565px"></b><b class="dt" style="left:645px;top:565px"></b><b class="dt" style="left:648px;top:565px"></b><span class="t" style="top:550px;left:660.5px">0000000750</span><span class="t" style="top:550px;left:737.5px">02.08.2017</span><span class="t" style="top:550px;left:814.5px">11:2</span>
<span class="t" style="top:569px;left:9.0px">0000007399</span><span class="t" style="top:569px;left:84.5px;transform:scaleX(0.95)">TEST</span><span class="t" style="top:569px;left:219.5px;transform:scaleX(0.884)">ENTSORGU</span><b class="dt" style="left:282px;top:584px"></b><b class="dt" style="left:285px;top:584px"></b><b class="dt" style="left:288px;top:584px"></b><span class="t" style="top:569px;left:296.5px">6</span><span class="t" style="top:569px;left:331.5px">A</span><span class="t" style="top:569px;left:345.5px">005</span><span class="t" style="top:569px;left:373.5px">1</span><span class="t" style="top:569px;left:386px;width:72px;text-align:right">3145</span><span class="t" style="top:569px;left:463px;width:37px;text-align:right">0</span><span class="t" style="top:569px;left:506.5px">0000000757</span><span class="t" style="top:569px;left:583.5px;transform:scaleX(0.93)">PRODUKTI</span><b class="dt" style="left:642px;top:584px"></b><b class="dt" style="left:645px;top:584px"></b><b class="dt" style="left:648px;top:584px"></b><span class="t" style="top:569px;left:660.5px">0000000750</span><span class="t" style="top:569px;left:737.5px">02.08.2017</span><span class="t" style="top:569px;left:814.5px">11:2</span>

</div>
<svg id="cur" width="14" height="21" viewBox="0 0 14 21"><path d="M1.5 1.5L1.5 17.5L5.7 14.2L8.5 19.5L10.8 18.5L8.3 13.2L12.6 13.2Z" fill="#fff" stroke="#161622" stroke-width="1.1" stroke-linejoin="miter"/></svg>
</body></html>
